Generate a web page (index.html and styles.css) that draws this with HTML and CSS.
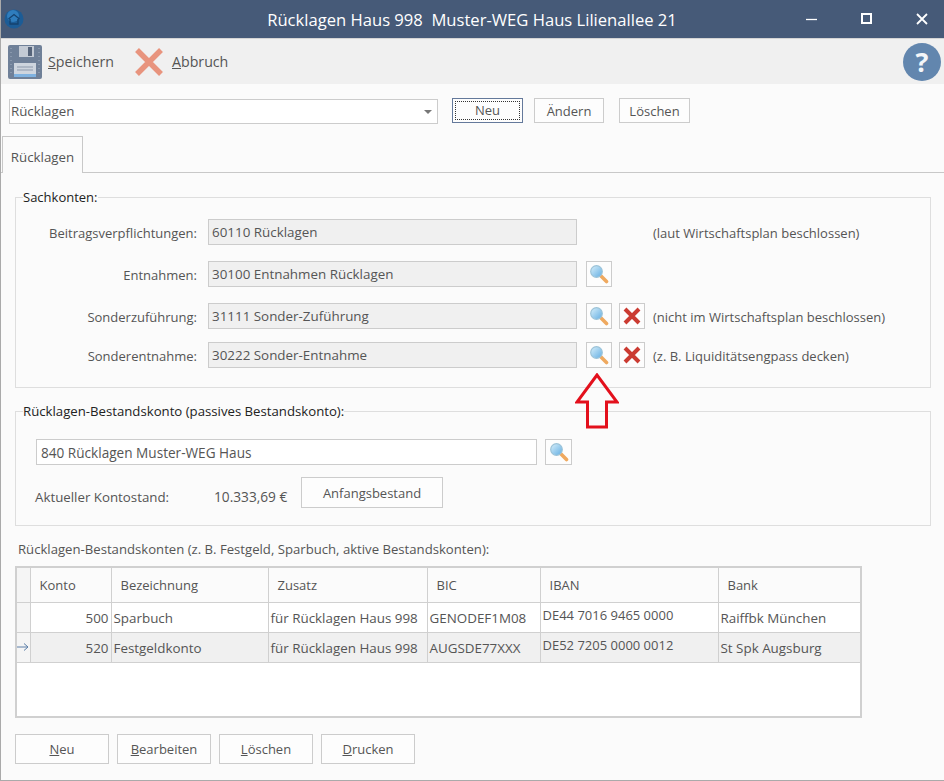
FILE: index.html
```html
<!DOCTYPE html>
<html lang="de">
<head>
<title>Rücklagen Haus 998</title>
<meta charset="utf-8">
<link rel="stylesheet" href="styles.css">
</head>
<body>
<svg class="icon-defs" width="0" height="0">
  <defs>
    <linearGradient id="lens" x1="0" y1="0" x2="1" y2="1">
      <stop offset="0" stop-color="#d8f0fb"/>
      <stop offset="1" stop-color="#62ade2"/>
    </linearGradient>
    <symbol id="lookup" viewBox="0 0 20 20">
      <path d="M11.500 11.500l6 6" stroke="#efa95f" stroke-width="3.600" stroke-linecap="round"/>
      <circle cx="7.500" cy="7.500" r="5.800" fill="url(#lens)" stroke="#9cc3d8" stroke-width="1.200"/>
    </symbol>
    <symbol id="remove" viewBox="0 0 20 20">
      <path d="M3 3l14 14M17 3L3 17" stroke="#cb3b32" stroke-width="4"/>
    </symbol>
  </defs>
</svg>
<div class="window">
  <header class="titlebar">
    <svg class="app-icon" viewBox="0 0 20 20">
      <circle cx="10" cy="10" r="9.500" fill="#1c5c96"/>
      <circle cx="9" cy="7" r="6" fill="#2f7dbd"/>
      <path d="M4.500 10L10 5.500l5.500 4.500M6 10v5h8v-5" fill="none" stroke="#15426f" stroke-width="1.300"/>
    </svg>
    <div class="titlebar__text">Rücklagen Haus 998  Muster-WEG Haus Lilienallee 21</div>
    <div class="wincontrols">
      <svg class="wincontrol" viewBox="0 0 12 12"><path d="M0 6.500h11" stroke="#fff" stroke-width="1.300"/></svg>
      <svg class="wincontrol" viewBox="0 0 12 12"><rect x="1" y="1" width="9" height="9" fill="none" stroke="#fff" stroke-width="2"/></svg>
      <svg class="wincontrol" viewBox="0 0 12 12"><path d="M1 1l10 10M11 1L1 11" stroke="#fff" stroke-width="1.800"/></svg>
    </div>
  </header>

  <div class="toolbar">
    <div class="toolbar__item">
      <svg class="toolbar__save" viewBox="0 0 34 34">
        <rect x="0" y="0" width="34" height="34" rx="2" fill="#6f8098"/>
        <rect x="11" y="1" width="15" height="11" fill="#c3cad4"/>
        <rect x="20" y="2" width="4" height="9" fill="#56647a"/>
        <path d="M3 3v28M31 3v28" stroke="#a3afc0" stroke-dasharray="1 3"/>
        <rect x="6" y="18" width="22" height="13" fill="#ced5de"/>
        <path d="M9 22h16M9 25h16" stroke="#8d99ab"/>
        <rect x="6" y="29" width="22" height="3" fill="#7fb2e0"/>
      </svg>
      <span><u>S</u>peichern</span>
    </div>
    <div class="toolbar__item toolbar__item--cancel">
      <svg class="toolbar__cancel" viewBox="0 0 28 28"><path d="M2 2l24 24M26 2L2 26" stroke="#e8947e" stroke-width="5.500"/></svg>
      <span><u>A</u>bbruch</span>
    </div>
    <div class="help">?</div>
  </div>

  <main class="main">
    <div class="selectrow">
      <div class="combo">Rücklagen<span class="combo__arrow"></span></div>
      <button class="btn btn--default"><span class="btn__focus">Neu</span></button>
      <button class="btn btn--change">Ändern</button>
      <button class="btn btn--delete">Löschen</button>
    </div>

    <div class="tabs"><div class="tab">Rücklagen</div></div>

    <fieldset class="group group--accounts">
      <legend>Sachkonten:</legend>
      <div class="accounts">
        <label>Beitragsverpflichtungen:</label>
        <div class="field">60110 Rücklagen</div>
        <span></span><span></span>
        <div class="note">(laut Wirtschaftsplan beschlossen)</div>

        <label>Entnahmen:</label>
        <div class="field">30100 Entnahmen Rücklagen</div>
        <button class="iconbtn"><svg><use href="#lookup"/></svg></button>
        <span></span><span></span>

        <label>Sonderzuführung:</label>
        <div class="field">31111 Sonder-Zuführung</div>
        <button class="iconbtn"><svg><use href="#lookup"/></svg></button>
        <button class="iconbtn"><svg><use href="#remove"/></svg></button>
        <div class="note">(nicht im Wirtschaftsplan beschlossen)</div>

        <label>Sonderentnahme:</label>
        <div class="field">30222 Sonder-Entnahme</div>
        <button class="iconbtn"><svg><use href="#lookup"/></svg></button>
        <button class="iconbtn"><svg><use href="#remove"/></svg></button>
        <div class="note">(z. B. Liquiditätsengpass decken)</div>
      </div>
    </fieldset>

    <fieldset class="group group--stock">
      <legend>Rücklagen-Bestandskonto (passives Bestandskonto):</legend>
      <div class="stockrow">
        <div class="field field--white">840 Rücklagen Muster-WEG Haus</div>
        <button class="iconbtn iconbtn--wide"><svg><use href="#lookup"/></svg></button>
      </div>
      <div class="balancerow">
        <span class="balance__label">Aktueller Kontostand:</span>
        <span class="balance__value">10.333,69 €</span>
        <button class="btn btn--opening">Anfangsbestand</button>
      </div>
    </fieldset>

    <div class="gridtitle">Rücklagen-Bestandskonten (z. B. Festgeld, Sparbuch, aktive Bestandskonten):</div>
    <div class="gridwrap">
      <table class="grid">
        <colgroup>
          <col class="c-ind"><col class="c-konto"><col class="c-bez"><col class="c-zusatz"><col class="c-bic"><col class="c-iban"><col class="c-bank">
        </colgroup>
        <thead>
          <tr><th class="ind"></th><th>Konto</th><th>Bezeichnung</th><th>Zusatz</th><th>BIC</th><th>IBAN</th><th>Bank</th></tr>
        </thead>
        <tbody>
          <tr>
            <td class="ind"></td><td class="num">500</td><td>Sparbuch</td><td>für Rücklagen Haus 998</td><td>GENODEF1M08</td><td class="iban">DE44 7016 9465 0000</td><td>Raiffbk München</td>
          </tr>
          <tr class="current">
            <td class="ind"><svg viewBox="0 0 12 10"><path d="M0 5h11M7 1.500L11 5 7 8.500" fill="none" stroke="#5c7fa8"/></svg></td><td class="num">520</td><td>Festgeldkonto</td><td>für Rücklagen Haus 998</td><td>AUGSDE77XXX</td><td class="iban">DE52 7205 0000 0012</td><td>St Spk Augsburg</td>
          </tr>
        </tbody>
      </table>
    </div>

    <div class="actions">
      <button class="btn btn--action"><u>N</u>eu</button>
      <button class="btn btn--action"><u>B</u>earbeiten</button>
      <button class="btn btn--action"><u>L</u>öschen</button>
      <button class="btn btn--action"><u>D</u>rucken</button>
    </div>

    <svg class="redarrow" viewBox="0 0 44 56"><path d="M22 2L2 29h10.500v25h19V29H42z" fill="none" stroke="#e3101c" stroke-width="3"/></svg>
  </main>
</div>
</body>
</html>
```

FILE: styles.css
```css
* {
  box-sizing: border-box;
}

body {
  margin: 0;
  background: #fbfbfb;
  font-family: "Open Sans", "Noto Sans", sans-serif;
  font-size: 13px;
  color: #555;
}

.icon-defs {
  position: absolute;
}

.window {
  width: 944px;
  height: 781px;
  overflow: hidden;
  border-left: 1px solid #aaa;
  border-bottom: 1px solid #aaa;
  display: flex;
  flex-direction: column;
}

/* title bar */
.titlebar {
  flex: none;
  height: 39px;
  margin-left: -1px;
  background: #465a78;
  border-bottom: 1px solid #d4d4d4;
  display: flex;
  align-items: center;
  position: relative;
  color: #fff;
}

.app-icon {
  width: 20px;
  height: 20px;
  margin-left: 4px;
}

.titlebar__text {
  position: absolute;
  left: 0;
  right: 0;
  text-align: center;
  font-size: 16.6px;
  white-space: pre;
}

.wincontrols {
  margin-left: auto;
  margin-right: 16px;
  display: flex;
  gap: 43px;
}

.wincontrol {
  width: 12px;
  height: 12px;
}

/* toolbar */
.toolbar {
  flex: none;
  height: 45px;
  background: #f0f0f0;
  display: flex;
  align-items: center;
  padding-left: 7px;
  font-size: 14.2px;
}

.toolbar__item {
  display: flex;
  align-items: center;
  gap: 6px;
}

.toolbar__item--cancel {
  margin-left: 21px;
  gap: 9px;
}

.toolbar__save {
  width: 34px;
  height: 34px;
}

.toolbar__cancel {
  width: 28px;
  height: 28px;
}

.help {
  margin-left: auto;
  margin-right: 3px;
  width: 38px;
  height: 38px;
  border-radius: 50%;
  background: #6286ae;
  color: #f4f6f9;
  font-size: 27px;
  font-weight: 700;
  line-height: 38px;
  text-align: center;
}

/* main */
.main {
  flex: 1;
  position: relative;
}

.selectrow {
  display: flex;
  align-items: flex-start;
  padding: 14px 0 0 8px;
}

.combo {
  width: 429px;
  height: 25px;
  margin-top: 1px;
  background: #fff;
  border: 1px solid #ccc;
  padding-left: 1px;
  font-size: 13.3px;
  line-height: 23px;
  position: relative;
}

.combo__arrow {
  position: absolute;
  right: 5px;
  top: 10px;
  border: 4px solid transparent;
  border-top-color: #777;
}

.btn {
  background: #fdfdfd;
  border: 1px solid #ccc;
  font: inherit;
  color: inherit;
  padding: 0;
  height: 25px;
}

.btn--default {
  width: 71px;
  margin-left: 14px;
  border-color: #64799b;
  padding: 2px;
}

.btn__focus {
  display: block;
  height: 100%;
  border: 1px dotted #333;
  line-height: 17px;
}

.btn--change {
  width: 70px;
  margin-left: 11px;
}

.btn--delete {
  width: 71px;
  margin-left: 15px;
}

/* tabs */
.tabs {
  margin-top: 12px;
  height: 37px;
  border-bottom: 1px solid #c8c8c8;
}

.tab {
  width: 81px;
  height: 37px;
  margin-left: 1px;
  background: #fbfbfb;
  border: 1px solid #c8c8c8;
  border-bottom: none;
  font-size: 13.3px;
  text-align: center;
  line-height: 40px;
}

/* group boxes */
.group {
  margin: 0 0 0 14px;
  padding: 0;
  width: 916px;
  border: 1px solid #dedede;
}

.group legend {
  margin-left: 7px;
  padding: 0;
  color: #222;
  line-height: 18px;
}

.group--accounts {
  margin-top: 15px;
  height: 200px;
}

.group--stock {
  margin-top: 14px;
  height: 124px;
}

.group--stock legend {
  font-size: 13.2px;
}

.accounts {
  display: grid;
  grid-template-columns: 192px 378px 33px 34px auto;
  grid-template-rows: 42px 42px 39px 26px;
  align-items: start;
  margin-top: 13px;
}

.accounts label {
  height: 26px;
  line-height: 28px;
  text-align: right;
  padding-right: 11px;
}

.field {
  width: 369px;
  height: 26px;
  background: #f0f0f0;
  border: 1px solid #ccc;
  padding-left: 3px;
  font-size: 13.4px;
  line-height: 25px;
}

.field--white {
  width: 501px;
  background: #fff;
  padding-left: 4px;
  font-size: 13.6px;
}

.note {
  line-height: 28px;
  white-space: nowrap;
}

.iconbtn {
  width: 26px;
  height: 26px;
  padding: 0;
  background: #fdfdfd;
  border: 1px solid #ccc;
  display: flex;
  align-items: center;
  justify-content: center;
}

.iconbtn--wide {
  width: 27px;
}

.iconbtn svg {
  width: 20px;
  height: 20px;
}

.stockrow {
  display: flex;
  gap: 8px;
  margin: 19px 0 0 20px;
}

.balancerow {
  display: flex;
  align-items: center;
  margin: 12px 0 0 19px;
}

.balance__label {
  width: 179px;
  margin-top: 8px;
  font-size: 13.3px;
}

.balance__value {
  width: 87px;
  margin-top: 8px;
  font-size: 13.7px;
}

.btn--opening {
  width: 142px;
  height: 31px;
}

/* grid */
.gridtitle {
  margin: 14px 0 0 17px;
  font-size: 13.15px;
  line-height: 18px;
}

.gridwrap {
  margin: 8px 0 0 14px;
  width: 847px;
  height: 152px;
  flex: none;
  border: 2px solid #d0d0d0;
  background: #fff;
}

.grid {
  width: 843px;
  table-layout: fixed;
  border-collapse: collapse;
  font-size: 13.4px;
}

.c-ind { width: 13px; }
.c-konto { width: 81px; }
.c-bez { width: 157px; }
.c-zusatz { width: 159px; }
.c-bic { width: 113px; }
.c-iban { width: 178px; }
.c-bank { width: 142px; }

.grid th,
.grid td {
  border: 1px solid #d0d0d0;
  border-top: none;
  padding: 0 0 0 2px;
  text-align: left;
  white-space: nowrap;
  overflow: hidden;
}

.grid th:last-child,
.grid td:last-child {
  border-right: none;
}

.grid th:first-child,
.grid td:first-child {
  border-left: none;
}

.grid th {
  height: 34px;
  background: #fbfbfb;
  font-size: 13px;
  font-weight: 400;
  padding-left: 9px;
}

.grid td {
  height: 30px;
  padding-top: 1px;
}

.grid .ind {
  padding: 0;
  background: #f5f5f5;
}

.grid .ind svg {
  display: block;
  width: 12px;
  height: 10px;
}

.grid td.num {
  text-align: right;
  padding: 1px 2px 0 0;
}

.grid td.iban {
  padding: 0 0 5px 2px;
  font-size: 13px;
}

.current td {
  background: #f0f0f0;
}

/* bottom buttons */
.actions {
  display: flex;
  gap: 8px;
  margin: 16px 0 0 14px;
}

.btn--action {
  width: 94px;
  height: 30px;
}

.redarrow {
  position: absolute;
  left: 574px;
  top: 289px;
  width: 44px;
  height: 56px;
}
```
